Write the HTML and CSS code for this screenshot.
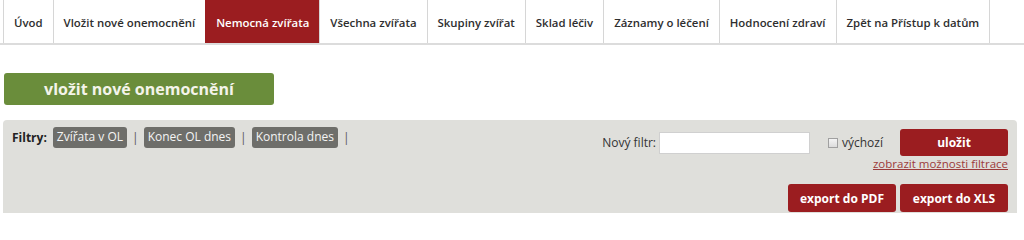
FILE: index.html
```html
<!DOCTYPE html>
<html lang="cs">
<head>
<meta charset="utf-8">
<title>Nemocná zvířata</title>
<link rel="stylesheet" href="styles.css">
</head>
<body>
<nav class="tabs">
  <a class="tab">Úvod</a>
  <a class="tab">Vložit nové onemocnění</a>
  <a class="tab active">Nemocná zvířata</a>
  <a class="tab">Všechna zvířata</a>
  <a class="tab">Skupiny zvířat</a>
  <a class="tab">Sklad léčiv</a>
  <a class="tab">Záznamy o léčení</a>
  <a class="tab">Hodnocení zdraví</a>
  <a class="tab last">Zpět na Přístup k datům</a>
</nav>
<main class="content">
  <a class="btn-green">vložit nové onemocnění</a>
  <section class="panel">
    <div class="row-top">
      <div class="filters">
        <span class="filters-label">Filtry:</span>
        <span class="tag">Zvířata v OL</span>
        <span class="sep">|</span>
        <span class="tag">Konec OL dnes</span>
        <span class="sep">|</span>
        <span class="tag">Kontrola dnes</span>
        <span class="sep">|</span>
      </div>
      <div class="actions">
        <div class="save-row">
          <label class="new-label">Nový filtr:</label>
          <input class="new-input" type="text">
          <label class="default"><span class="checkbox"></span>výchozí</label>
          <a class="btn-red btn-save">uložit</a>
        </div>
        <a class="link">zobrazit možnosti filtrace</a>
        <div class="export-row">
          <a class="btn-red btn-export">export do PDF</a>
          <a class="btn-red btn-export">export do XLS</a>
        </div>
      </div>
    </div>
  </section>
</main>
</body>
</html>
```

FILE: styles.css
```css
* { box-sizing: border-box; }
html, body { margin: 0; padding: 0; background: #ffffff; }
body {
  font-family: "Open Sans", "Noto Sans", sans-serif;
  color: #333333;
  overflow: hidden;
}
.tabs {
  display: flex;
  height: 45px;
  padding-left: 3px;
  border-bottom: 2px solid #dcdcdc;
}
.tab {
  display: flex;
  align-items: center;
  justify-content: center;
  height: 43px;
  padding: 1px 10px 0;
  border-left: 1px solid #d6d6d6;
  font-size: 11.4px;
  font-weight: 600;
  color: #2e2e2e;
  text-decoration: none;
  white-space: nowrap;
}
.tab.last { border-right: 1px solid #d6d6d6; }
.tab.active {
  background: #9b1d20;
  color: #ffffff;
  border-left-color: #9b1d20;
}
.content { padding: 28px 0 0 4px; }
.btn-green {
  display: flex;
  align-items: center;
  justify-content: center;
  width: 270px;
  height: 32px;
  background: #6a8d3b;
  border-radius: 3px;
  color: #f4f4ea;
  font-size: 16px;
  font-weight: 700;
  text-decoration: none;
}
.panel {
  margin: 15px 0 0 -1px;
  width: 1014px;
  height: 93px;
  background: #dfdfdb;
  border-radius: 4px 4px 0 0;
  padding: 7px 9px 0 9px;
}
.row-top {
  display: flex;
  justify-content: space-between;
  align-items: flex-start;
}
.filters {
  display: flex;
  align-items: center;
  font-size: 12px;
}
.filters-label {
  font-size: 12px;
  font-weight: 700;
  color: #222222;
  margin-right: 6px;
}
.tag {
  background: #6e6e6a;
  color: #f4f4f4;
  border-radius: 3px;
  padding: 1px 4px 2px;
  height: 21px;
  line-height: 18px;
}
.sep { color: #555555; font-size: 12px; margin: 0 5px; }
.actions {
  display: flex;
  flex-direction: column;
  align-items: flex-end;
}
.save-row {
  display: flex;
  align-items: center;
  margin-top: 2px;
}
.new-label {
  font-size: 12px;
  color: #333333;
  margin-right: 3px;
}
.new-input {
  width: 151px;
  height: 22px;
  border: 1px solid #d0d0d0;
  background: #ffffff;
  margin: 0;
  padding: 0;
}
.default {
  display: flex;
  align-items: center;
  margin-left: 18px;
  font-size: 12px;
  color: #333333;
}
.checkbox {
  width: 10px;
  height: 10px;
  border: 1px solid #a0a0a0;
  background: linear-gradient(#f4f4f4, #dcdcdc);
  margin-right: 4px;
}
.btn-red {
  display: flex;
  align-items: center;
  justify-content: center;
  background: #9b1d20;
  color: #ffffff;
  font-size: 12px;
  font-weight: 700;
  border-radius: 3px;
  text-decoration: none;
}
.btn-save {
  width: 108px;
  height: 27px;
  margin-left: 17px;
}
.link {
  font-size: 11.5px;
  color: #9c3a3a;
  text-decoration: underline;
  line-height: 16px;
}
.export-row {
  display: flex;
  gap: 4px;
  margin-top: 12px;
}
.btn-export {
  width: 108px;
  height: 28px;
}
```
